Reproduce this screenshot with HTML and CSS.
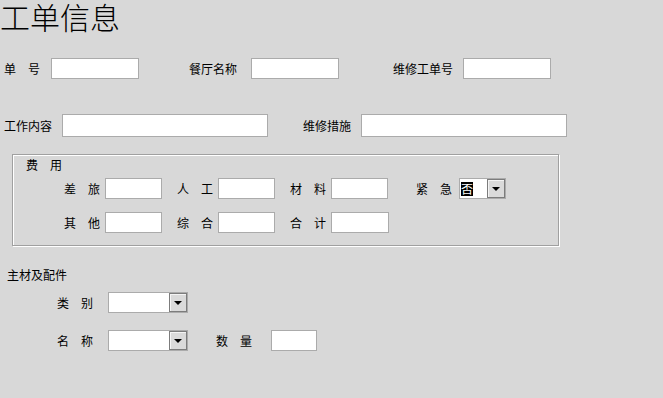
FILE: index.html
```html
<!DOCTYPE html>
<html lang="zh-CN">
<head>
  <meta charset="utf-8">
  <title>工单信息</title>
  <link rel="stylesheet" href="styles.css">
</head>
<body>
  <h1 class="title">工单信息</h1>

  <div class="row row-top">
    <span class="lbl">单　号</span>
    <input class="box w88 gap11" type="text">
    <span class="lbl ml50">餐厅名称</span>
    <input class="box w88 gap14" type="text">
    <span class="lbl ml54">维修工单号</span>
    <input class="box w88 gap10" type="text">
  </div>

  <div class="row row-wide">
    <span class="lbl">工作内容</span>
    <input class="box tall w206 gap10" type="text">
    <span class="lbl ml35">维修措施</span>
    <input class="box tall w206 gap10" type="text">
  </div>

  <div class="fees">
    <div class="caption">费　用</div>
    <div class="row fee-row">
      <span class="lbl">差　旅</span>
      <input class="box w57 gap5" type="text">
      <span class="lbl ml15">人　工</span>
      <input class="box w57 gap5" type="text">
      <span class="lbl ml15">材　料</span>
      <input class="box w57 gap5" type="text">
      <span class="lbl ml28">紧　急</span>
      <div class="combo w47 gap7">
        <span class="picked">否</span>
        <span class="drop"></span>
      </div>
    </div>
    <div class="row fee-row second">
      <span class="lbl">其　他</span>
      <input class="box w57 gap5" type="text">
      <span class="lbl ml15">综　合</span>
      <input class="box w57 gap5" type="text">
      <span class="lbl ml15">合　计</span>
      <input class="box w58 gap5" type="text">
    </div>
  </div>

  <div class="parts-title">主材及配件</div>
  <div class="row part-row">
    <span class="lbl">类　别</span>
    <div class="combo w80 gap15"><span></span><span class="drop"></span></div>
  </div>
  <div class="row part-row second">
    <span class="lbl">名　称</span>
    <div class="combo w80 gap15"><span></span><span class="drop"></span></div>
    <span class="lbl ml28">数　量</span>
    <input class="box w46 gap19" type="text">
  </div>
</body>
</html>
```

FILE: styles.css
```css
body {
  margin: 0;
  background: #d8d8d8;
  color: #000;
  font-family: "Noto Sans CJK SC", "Noto Sans", sans-serif;
  font-size: 12px;
}

.title {
  margin: 0;
  height: 32px;
  font-size: 30px;
  line-height: 32px;
  font-weight: 300;
  letter-spacing: 0;
}

.row {
  display: flex;
  align-items: center;
}

.lbl {
  white-space: nowrap;
  line-height: 14px;
}

.box {
  box-sizing: border-box;
  height: 21px;
  margin: 0;
  padding: 0 2px;
  border: 1px solid #ababab;
  background: #fff;
  font: inherit;
  outline: none;
}

.box.tall {
  height: 23px;
}

.w46 { width: 46px; }
.w47 { width: 47px; }
.w57 { width: 57px; }
.w58 { width: 58px; }
.w80 { width: 80px; }
.w88 { width: 88px; }
.w206 { width: 206px; }

.gap5 { margin-left: 5px; }
.gap7 { margin-left: 7px; }
.gap10 { margin-left: 10px; }
.gap11 { margin-left: 11px; }
.gap14 { margin-left: 14px; }
.gap15 { margin-left: 15px; }
.gap19 { margin-left: 19px; }

.ml15 { margin-left: 15px; }
.ml28 { margin-left: 28px; }
.ml35 { margin-left: 35px; }
.ml50 { margin-left: 50px; }
.ml54 { margin-left: 54px; }

.row-top {
  margin-top: 26px;
  padding-left: 4px;
}

.row-wide {
  margin-top: 35px;
  padding-left: 4px;
}

/* fee group box */
.fees {
  width: 547px;
  box-sizing: border-box;
  margin: 17px 0 0 12px;
  padding: 3px 0 12px 0;
  border: 1px solid #a0a0a0;
  box-shadow: inset 1px 1px 0 #fff, 1px 1px 0 #fff;
}

.caption {
  padding-left: 13px;
  line-height: 14px;
}

.fee-row {
  margin-top: 6px;
  padding-left: 51px;
}

.fee-row.second {
  margin-top: 13px;
}

/* fake combo box */
.combo {
  box-sizing: border-box;
  height: 21px;
  display: flex;
  justify-content: space-between;
  align-items: center;
  border: 1px solid #ababab;
  background: #fff;
}

.picked {
  margin-left: 1px;
  background: #000;
  color: #fff;
  line-height: 14px;
}

.drop {
  box-sizing: border-box;
  width: 18px;
  height: 19px;
  display: flex;
  align-items: center;
  justify-content: center;
  border: 1px solid #7c7c7c;
  box-shadow: inset 1px 1px 0 #f4f4f4;
  background: #dadada;
}

.drop::after {
  content: "";
  border-left: 4px solid transparent;
  border-right: 4px solid transparent;
  border-top: 4px solid #000;
  margin-top: 1px;
}

.parts-title {
  margin-top: 22px;
  padding-left: 7px;
  line-height: 14px;
}

.part-row {
  margin-top: 10px;
  padding-left: 57px;
}

.part-row.second {
  margin-top: 17px;
}
```
